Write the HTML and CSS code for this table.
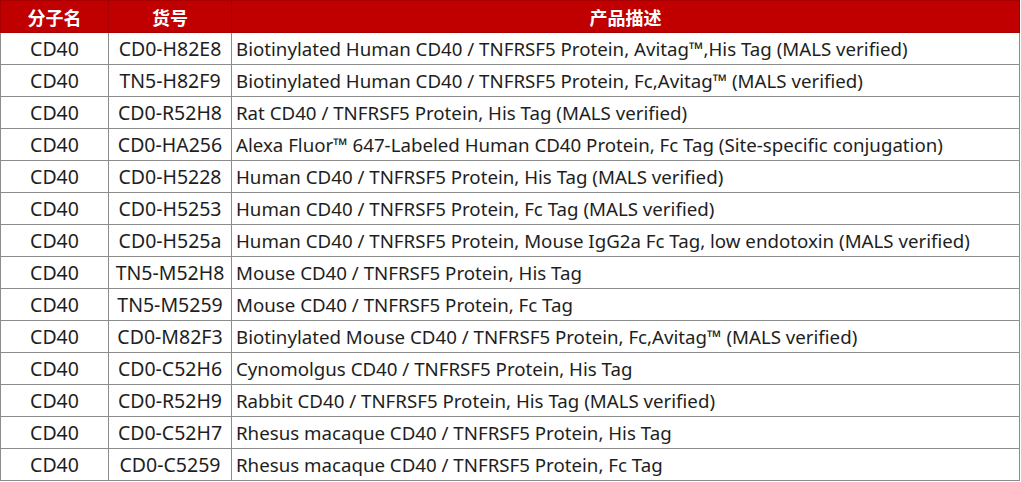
FILE: index.html
```html
<!DOCTYPE html>
<html>
<head>
<meta charset="utf-8">
<link rel="stylesheet" href="styles.css">
</head>
<body>
<table class="products">
  <colgroup>
    <col class="c-name">
    <col class="c-code">
    <col class="c-desc">
  </colgroup>
  <thead>
    <tr><th>分子名</th><th>货号</th><th>产品描述</th></tr>
  </thead>
  <tbody>
    <tr><td class="ctr">CD40</td><td class="ctr">CD0-H82E8</td><td>Biotinylated Human CD40 / TNFRSF5 Protein, Avitag™,His Tag (MALS verified)</td></tr>
    <tr><td class="ctr">CD40</td><td class="ctr">TN5-H82F9</td><td>Biotinylated Human CD40 / TNFRSF5 Protein, Fc,Avitag™ (MALS verified)</td></tr>
    <tr><td class="ctr">CD40</td><td class="ctr">CD0-R52H8</td><td>Rat CD40 / TNFRSF5 Protein, His Tag (MALS verified)</td></tr>
    <tr><td class="ctr">CD40</td><td class="ctr">CD0-HA256</td><td>Alexa Fluor™ 647-Labeled Human CD40 Protein, Fc Tag (Site-specific conjugation)</td></tr>
    <tr><td class="ctr">CD40</td><td class="ctr">CD0-H5228</td><td>Human CD40 / TNFRSF5 Protein, His Tag (MALS verified)</td></tr>
    <tr><td class="ctr">CD40</td><td class="ctr">CD0-H5253</td><td>Human CD40 / TNFRSF5 Protein, Fc Tag (MALS verified)</td></tr>
    <tr><td class="ctr">CD40</td><td class="ctr">CD0-H525a</td><td>Human CD40 / TNFRSF5 Protein, Mouse IgG2a Fc Tag, low endotoxin (MALS verified)</td></tr>
    <tr><td class="ctr">CD40</td><td class="ctr">TN5-M52H8</td><td>Mouse CD40 / TNFRSF5 Protein, His Tag</td></tr>
    <tr><td class="ctr">CD40</td><td class="ctr">TN5-M5259</td><td>Mouse CD40 / TNFRSF5 Protein, Fc Tag</td></tr>
    <tr><td class="ctr">CD40</td><td class="ctr">CD0-M82F3</td><td>Biotinylated Mouse CD40 / TNFRSF5 Protein, Fc,Avitag™ (MALS verified)</td></tr>
    <tr><td class="ctr">CD40</td><td class="ctr">CD0-C52H6</td><td>Cynomolgus CD40 / TNFRSF5 Protein, His Tag</td></tr>
    <tr><td class="ctr">CD40</td><td class="ctr">CD0-R52H9</td><td>Rabbit CD40 / TNFRSF5 Protein, His Tag (MALS verified)</td></tr>
    <tr><td class="ctr">CD40</td><td class="ctr">CD0-C52H7</td><td>Rhesus macaque CD40 / TNFRSF5 Protein, His Tag</td></tr>
    <tr><td class="ctr">CD40</td><td class="ctr">CD0-C5259</td><td>Rhesus macaque CD40 / TNFRSF5 Protein, Fc Tag</td></tr>
  </tbody>
</table>
</body>
</html>
```
FILE: styles.css
```css
html, body {
  margin: 0;
  padding: 0;
  background: #ffffff;
}
.products {
  width: 1020px;
  border-collapse: collapse;
  table-layout: fixed;
  font-family: "Noto Sans", "Noto Sans CJK SC", sans-serif;
  font-size: 18.7px;
  color: #1e1e1e;
}
.c-name { width: 108px; }
.c-code { width: 123px; }
.products th {
  background: #c00000;
  color: #ffffff;
  font-family: "Noto Sans CJK SC", sans-serif;
  font-weight: 700;
  font-size: 18px;
  height: 31px;
  padding: 0;
  border: 1px solid #a80000;
  text-align: center;
}
.products td {
  height: 31px;
  padding: 0 0 0 4px;
  border: 1px solid #8c8c8c;
  white-space: nowrap;
  line-height: 20px;
}
.products td.ctr {
  text-align: center;
  padding: 0;
  font-size: 19.5px;
}
```
